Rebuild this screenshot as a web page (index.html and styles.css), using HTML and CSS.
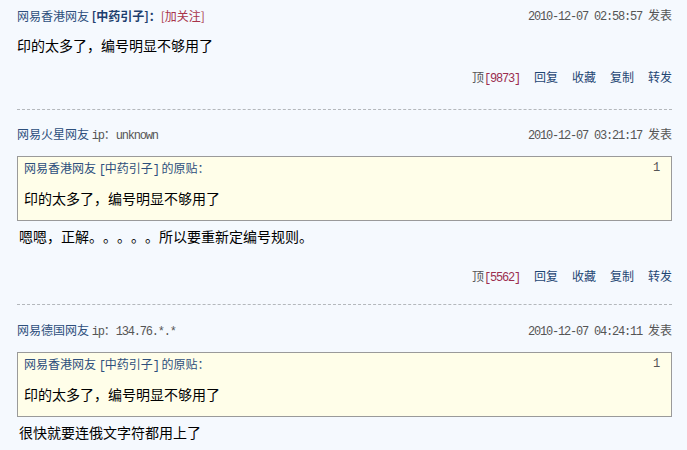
FILE: index.html
```html
<!DOCTYPE html>
<html lang="zh-CN">
<head>
<meta charset="utf-8">
<link rel="stylesheet" href="styles.css">
</head>
<body>
<div class="list">
  <div class="post p1">
    <div class="head">
      <div class="who"><a class="name">网易香港网友</a> <b class="nick">[中药引子]</b><span class="colon">：</span><a class="follow">[加关注]</a></div>
      <div class="time"><span class="mono">2010-12-07 02:58:57</span><span class="pub">发表</span></div>
    </div>
    <div class="body">印的太多了，编号明显不够用了</div>
    <div class="actions"><a class="up">顶<span class="mono cnt">[9873]</span></a><a>回复</a><a>收藏</a><a>复制</a><a>转发</a></div>
  </div>
  <div class="post p2">
    <div class="head">
      <div class="who"><a class="name">网易火星网友</a> <span class="ip"><span class="mono">ip</span>：<span class="mono">unknown</span></span></div>
      <div class="time"><span class="mono">2010-12-07 03:21:17</span><span class="pub">发表</span></div>
    </div>
    <div class="quote">
      <div class="qhead"><span class="qtitle">网易香港网友 <span class="mono">[</span>中药引子<span class="mono">]</span> 的原贴：</span><span class="mono floor">1</span></div>
      <div class="qbody">印的太多了，编号明显不够用了</div>
    </div>
    <div class="body reply">嗯嗯，正解。。。。。所以要重新定编号规则。</div>
    <div class="actions"><a class="up">顶<span class="mono cnt">[5562]</span></a><a>回复</a><a>收藏</a><a>复制</a><a>转发</a></div>
  </div>
  <div class="post p3">
    <div class="head">
      <div class="who"><a class="name">网易德国网友</a> <span class="ip"><span class="mono">ip</span>：<span class="mono">134.76.*.*</span></span></div>
      <div class="time"><span class="mono">2010-12-07 04:24:11</span><span class="pub">发表</span></div>
    </div>
    <div class="quote">
      <div class="qhead"><span class="qtitle">网易香港网友 <span class="mono">[</span>中药引子<span class="mono">]</span> 的原贴：</span><span class="mono floor">1</span></div>
      <div class="qbody">印的太多了，编号明显不够用了</div>
    </div>
    <div class="body reply">很快就要连俄文字符都用上了</div>
  </div>
</div>
</body>
</html>
```

FILE: styles.css
```css
* { box-sizing: border-box; }
html, body { margin: 0; padding: 0; background: #f5f9fe; }
body {
  font-family: "Noto Sans CJK SC", "Liberation Sans", sans-serif;
  font-size: 12px;
  color: #000;
  width: 687px;
  height: 450px;
  overflow: hidden;
  text-spacing-trim: space-all;
}
a { text-decoration: none; cursor: pointer; }
.mono {
  font-family: "Liberation Mono", monospace;
  letter-spacing: -1.2px;
}
.list { padding: 0 15px 0 17px; }
.post { border-bottom: 1px dashed #b4b8bc; }
.p1 { padding: 6px 0 22px; }
.p2 { padding: 15px 0 18px; }
.p3 { padding: 16px 0 0; border-bottom: none; }
.head {
  display: flex;
  justify-content: space-between;
  align-items: center;
  height: 20px;
  line-height: 20px;
}
.name { color: #2d4f7c; }
.nick { color: #1e3f6e; font-weight: bold; }
.colon { color: #1e3f6e; font-weight: bold; }
.follow { color: #a8344a; }
.ip { color: #555; }
.time { color: #555; }
.pub { margin-left: 6px; }
.body {
  font-size: 14px;
  line-height: 22px;
  margin-top: 8px;
}
.body.reply { margin-top: 4px; padding-left: 2px; }
.actions {
  display: flex;
  justify-content: flex-end;
  gap: 14px;
  line-height: 20px;
  height: 20px;
  margin-top: 11px;
}
.actions a { color: #1f4673; }
.actions a.up { color: #555; }
.cnt { color: #9b2d4f; }
.reply + .actions { margin-top: 19px; }
.quote {
  margin-top: 11px;
  border: 1px solid #9a9a9a;
  background: #fffee9;
  padding: 1px 12px 11px 6px;
}
.qhead {
  display: flex;
  justify-content: space-between;
  line-height: 20px;
}
.qtitle { color: #2d4f7c; }
.floor { color: #555; }
.qbody {
  font-size: 14px;
  line-height: 22px;
  margin-top: 7px;
}
```
